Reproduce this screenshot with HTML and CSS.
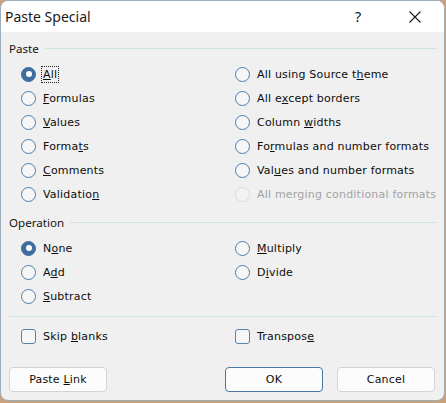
FILE: index.html
```html
<!DOCTYPE html>
<html>
<head>
<meta charset="utf-8">
<link rel="stylesheet" href="styles.css">
</head>
<body>
<div class="window">
  <div class="titlebar">
    <span class="title">Paste Special</span>
    <span class="help">?</span>
    <span class="close"><svg width="12" height="12" viewBox="0 0 12 12"><path d="M0.5 0.5 L11.5 11.5 M11.5 0.5 L0.5 11.5" stroke="#1a1a1a" stroke-width="1.1" fill="none"/></svg></span>
  </div>
  <div class="content">
    <div class="group"><span class="group-name">Paste</span><span class="rule"></span></div>
    <div class="options">
      <label class="opt"><span class="radio on"></span><span class="txt focus"><u>A</u>ll</span></label>
      <label class="opt"><span class="radio"></span><span class="txt">All using Source t<u>h</u>eme</span></label>
      <label class="opt"><span class="radio"></span><span class="txt"><u>F</u>ormulas</span></label>
      <label class="opt"><span class="radio"></span><span class="txt">All e<u>x</u>cept borders</span></label>
      <label class="opt"><span class="radio"></span><span class="txt"><u>V</u>alues</span></label>
      <label class="opt"><span class="radio"></span><span class="txt">Column <u>w</u>idths</span></label>
      <label class="opt"><span class="radio"></span><span class="txt">Forma<u>t</u>s</span></label>
      <label class="opt"><span class="radio"></span><span class="txt">Fo<u>r</u>mulas and number formats</span></label>
      <label class="opt"><span class="radio"></span><span class="txt"><u>C</u>omments</span></label>
      <label class="opt"><span class="radio"></span><span class="txt">Val<u>u</u>es and number formats</span></label>
      <label class="opt"><span class="radio"></span><span class="txt">Validatio<u>n</u></span></label>
      <label class="opt disabled"><span class="radio"></span><span class="txt">All merging conditional formats</span></label>
    </div>
    <div class="group gap"><span class="group-name">Operation</span><span class="rule"></span></div>
    <div class="options">
      <label class="opt"><span class="radio on"></span><span class="txt">N<u>o</u>ne</span></label>
      <label class="opt"><span class="radio"></span><span class="txt"><u>M</u>ultiply</span></label>
      <label class="opt"><span class="radio"></span><span class="txt">A<u>d</u>d</span></label>
      <label class="opt"><span class="radio"></span><span class="txt">D<u>i</u>vide</span></label>
      <label class="opt"><span class="radio"></span><span class="txt"><u>S</u>ubtract</span></label>
      <span></span>
    </div>
    <div class="sep"></div>
    <div class="options checks">
      <label class="opt"><span class="check"></span><span class="txt">Skip <u>b</u>lanks</span></label>
      <label class="opt"><span class="check"></span><span class="txt">Transpos<u>e</u></span></label>
    </div>
    <div class="buttons">
      <button class="btn">Paste <u>L</u>ink</button>
      <button class="btn default push">OK</button>
      <button class="btn">Cancel</button>
    </div>
  </div>
</div>
</body>
</html>
```

FILE: styles.css
```css
html, body {
  margin: 0;
  padding: 0;
  background: #c9a27c;
}
.window {
  width: 445px;
  height: 401px;
  box-sizing: border-box;
  border: 1px solid #9eabb8;
  border-radius: 8px;
  overflow: hidden;
  background: #f0f0f0;
  display: flex;
  flex-direction: column;
}
.titlebar {
  height: 31px;
  background: #ffffff;
  display: flex;
  align-items: center;
  padding-left: 4px;
  font-family: "Noto Sans", "Open Sans", sans-serif;
  font-size: 14px;
  color: #1b1b1b;
  flex-shrink: 0;
}
.title {
  flex: 1;
  margin-top: -1px;
}
.help {
  width: 14px;
  text-align: center;
  font-size: 15px;
  margin-right: 44px;
  margin-top: -1px;
}
.close {
  display: flex;
  margin-right: 23px;
}
.content {
  padding: 8px 7px 0 8px;
  font-family: "DejaVu Sans", Tahoma, sans-serif;
  font-size: 11px;
  letter-spacing: 0.2px;
  color: #0c0c0c;
}
.group {
  display: flex;
  align-items: center;
  height: 16px;
  font-family: "Noto Sans", "Open Sans", sans-serif;
  font-size: 11.6px;
  letter-spacing: 0;
  color: #141414;
}
.group.gap {
  margin-top: 8px;
}
.group-name {
  margin-right: 6px;
}
.rule {
  flex: 1;
  height: 1px;
  background: #cfdfe4;
  margin-top: 1px;
}
.options {
  display: grid;
  grid-template-columns: 214px 1fr;
  grid-auto-rows: 24px;
  margin-top: 6px;
  padding-left: 12px;
}
.opt {
  display: flex;
  align-items: center;
  white-space: nowrap;
}
.radio {
  width: 15px;
  height: 15px;
  box-sizing: border-box;
  border-radius: 50%;
  border: 1px solid #4f7dab;
  background: #f6f6f6;
  margin-right: 5px;
  flex-shrink: 0;
  position: relative;
}
.radio.on {
  background: #3d6e9f;
  border-color: #3d6e9f;
}
.radio.on::after {
  content: "";
  position: absolute;
  left: 3.5px;
  top: 3.5px;
  width: 6px;
  height: 6px;
  border-radius: 50%;
  background: #ffffff;
}
.txt {
  padding: 1px 1px;
  border: 1px solid transparent;
  line-height: 13px;
}
.txt.focus {
  border: 1px dotted #222;
}
u {
  text-decoration-thickness: 1px;
  text-underline-offset: 1px;
}
.disabled .txt {
  color: #a3a3a3;
}
.disabled .radio {
  border-color: #d3dde4;
  background: #f3f3f3;
}
.sep {
  height: 1px;
  background: #cfdfe4;
  margin-top: 8px;
}
.checks {
  margin-top: 7px;
}
.check {
  width: 15px;
  height: 15px;
  box-sizing: border-box;
  border-radius: 3px;
  border: 1px solid #5a80a8;
  background: #f6f6f6;
  margin-right: 5px;
  flex-shrink: 0;
}
.buttons {
  display: flex;
  margin-top: 19px;
  padding-right: 2px;
}
.btn {
  width: 98px;
  height: 25px;
  box-sizing: border-box;
  border: 1px solid #d3d3d3;
  border-radius: 4px;
  background: #fcfcfc;
  font-family: "DejaVu Sans", Tahoma, sans-serif;
  font-size: 11px;
  letter-spacing: 0.2px;
  color: #0c0c0c;
  padding: 0;
}
.btn.default {
  border-color: #4a76a6;
}
.btn.push {
  margin-left: auto;
  margin-right: 14px;
}
```
